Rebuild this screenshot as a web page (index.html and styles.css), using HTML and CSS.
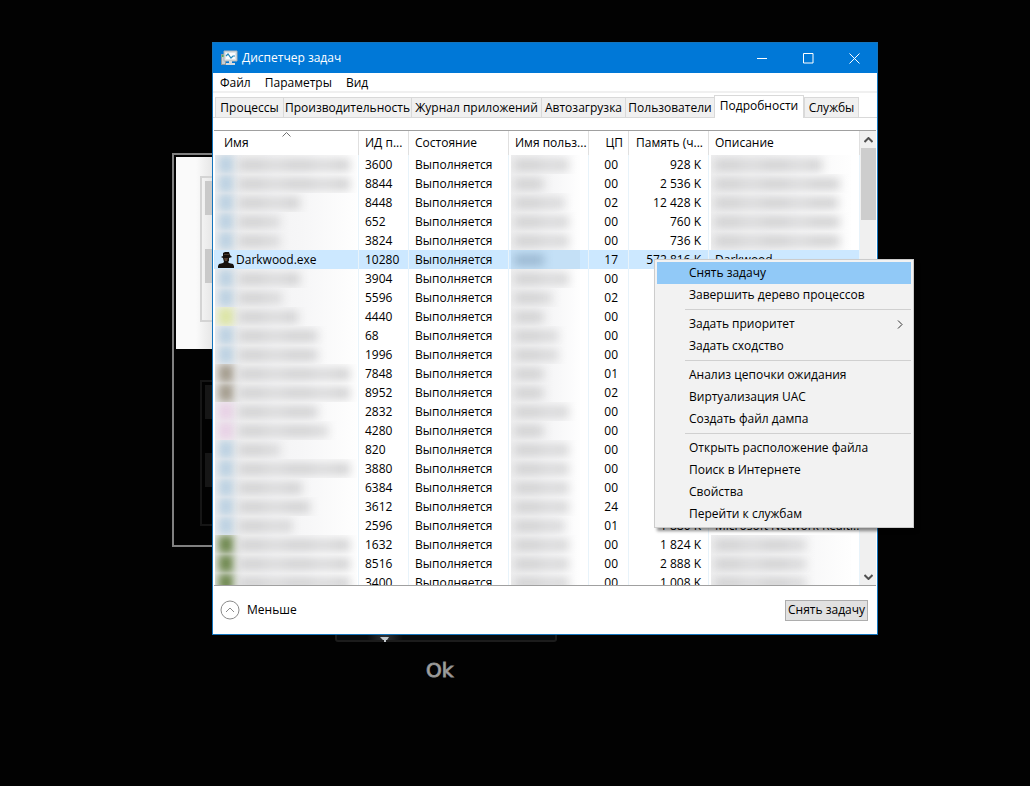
FILE: index.html
```
<!DOCTYPE html>
<html lang="ru">
<head>
<meta charset="utf-8">
<title>Диспетчер задач</title>
<link rel="stylesheet" href="styles.css">
</head>
<body>
<main class="desktop">
  <div class="game-panel" aria-hidden="true">
    <div class="save-slot save-slot-light"><div class="slot-frame"><i></i><i></i></div></div>
    <div class="save-slot save-slot-dark"><div class="slot-frame"><i></i><i></i></div></div>
  </div>
  <div class="game-slider" aria-hidden="true"><svg width="14" height="12" viewBox="0 0 14 12"><path d="M1 0h9L8 3H7v2H5V3H4z" fill="#c3c9cd"/></svg></div>
  <button class="game-ok" type="button">Ok</button>

  <section class="window" aria-label="Диспетчер задач">
    <header class="titlebar">
      <svg class="app-icon" width="17" height="16" viewBox="0 0 17 16">
        <path d="M0 4h5v11H0z" fill="#8f999f"/><path d="M1 5h3v9H1z" fill="#c9cfd2"/><path d="M1 5h2v2H1z" fill="#4fb35c"/>
        <path d="M3 1h13v10H3z" fill="#dfe5e8" stroke="#aab3b8"/><path d="M5 3h9v6H5z" fill="#fafdff"/>
        <path d="M5 6l2-2 3 4 2-2h2" fill="none" stroke="#2489bd" stroke-width="1.2"/>
        <path d="M8 11h3v2h3v2H5v-2h3z" fill="#d4dade"/>
      </svg>
      <h1>Диспетчер задач</h1>
      <div class="caption-buttons">
        <button type="button" aria-label="Свернуть"><svg width="11" height="11" viewBox="0 0 11 11"><path d="M0 5.5h10"/></svg></button>
        <button type="button" aria-label="Развернуть"><svg width="11" height="11" viewBox="0 0 11 11"><path d="M.5.5h9.500v9.500H.5z"/></svg></button>
        <button type="button" aria-label="Закрыть"><svg width="11" height="11" viewBox="0 0 11 11"><path d="M.5.5l10 10m0-10l-10 10"/></svg></button>
      </div>
    </header>
    <nav class="menubar">
      <button type="button">Файл</button><button type="button">Параметры</button><button type="button">Вид</button>
    </nav>
    <div class="tabs" role="tablist">
      <button type="button" role="tab">Процессы</button>
      <button type="button" role="tab">Производительность</button>
      <button type="button" role="tab">Журнал приложений</button>
      <button type="button" role="tab">Автозагрузка</button>
      <button type="button" role="tab">Пользователи</button>
      <button type="button" role="tab" aria-selected="true">Подробности</button>
      <button type="button" role="tab">Службы</button>
    </div>
    <div class="list">
      <div class="list-view">
        <table>
          <colgroup><col class="c-name"><col class="c-pid"><col class="c-state"><col class="c-user"><col class="c-cpu"><col class="c-mem"><col></colgroup>
          <thead><tr>
            <th>Имя<svg class="sort" width="9" height="5" viewBox="0 0 9 5"><path d="M.5 4.500l4-4 4 4"/></svg></th>
            <th>ИД п...</th><th>Состояние</th><th>Имя польз...</th><th class="num">ЦП</th><th class="num">Память (ч...</th><th>Описание</th>
          </tr></thead>
          <tbody id="rows"></tbody>
        </table>
      </div>
      <div class="scrollbar">
        <svg width="9" height="6" viewBox="0 0 9 6"><path d="M.5 5l4-4 4 4"/></svg>
        <div class="track"><div class="thumb"></div></div>
        <svg width="9" height="6" viewBox="0 0 9 6"><path d="M.5 1l4 4 4-4"/></svg>
      </div>
    </div>
    <footer class="footer">
      <button class="fewer" type="button"><svg width="20" height="20" viewBox="0 0 20 20"><circle cx="10" cy="10" r="9"/><path d="M6 12l4-4 4 4"/></svg>Меньше</button>
      <button class="end-task" type="button">Снять задачу</button>
    </footer>

    <div class="context-menu" role="menu">
      <button type="button" role="menuitem" class="active">Снять задачу</button>
      <button type="button" role="menuitem">Завершить дерево процессов</button>
      <hr>
      <button type="button" role="menuitem">Задать приоритет<svg width="6" height="9" viewBox="0 0 6 9"><path d="M1 .5l4 4-4 4"/></svg></button>
      <button type="button" role="menuitem">Задать сходство</button>
      <hr>
      <button type="button" role="menuitem">Анализ цепочки ожидания</button>
      <button type="button" role="menuitem">Виртуализация UAC</button>
      <button type="button" role="menuitem">Создать файл дампа</button>
      <hr>
      <button type="button" role="menuitem">Открыть расположение файла</button>
      <button type="button" role="menuitem">Поиск в Интернете</button>
      <button type="button" role="menuitem">Свойства</button>
      <button type="button" role="menuitem">Перейти к службам</button>
    </div>
  </section>
</main>
<script src="rows.js"></script>
</body>
</html>
```
FILE: styles.css
```
* { box-sizing: border-box; }
body { margin: 0; background: #020202; color: #000; font: 12px/16px "Open Sans", "Noto Sans", sans-serif; }
button { margin: 0; padding: 0; border: 0; background: none; color: inherit; font: inherit; white-space: nowrap; }
svg { display: block; fill: none; }
.desktop { position: relative; min-height: 100vh; overflow: hidden; }

/* game screen behind the window */
.game-panel { position: absolute; left: 172px; top: 153px; width: 300px; height: 394px; padding: 2px; border: 2px solid #808080; }
.save-slot { height: 192px; padding: 19px 24px; }
.save-slot-light { background: linear-gradient(90deg, #fafafa 20px, #e2e2e2 40px); }
.save-slot-dark { margin-top: 12px; }
.slot-frame { display: flex; flex-direction: column; gap: 34px; height: 146px; padding: 3px; border: 2px solid #d4d4d4; }
.slot-frame i { height: 34px; background: #c9c9c9; }
.save-slot-dark .slot-frame { border-color: #161616; }
.save-slot-dark i { background: #161616; }
.game-slider { position: absolute; left: 335px; top: 620px; width: 222px; height: 22px; padding: 15px 42px 0; border: 2px solid #1c1c1c; border-radius: 3px; background: radial-gradient(circle at 48px 16px, #303336, #080b0e 18px); }
.game-ok { position: absolute; left: 426px; top: 658px; color: #a8a8a8; font: 20px/24px "DejaVu Sans", sans-serif; -webkit-text-stroke: 1px #909090; }

.window { position: absolute; left: 212px; right: 152px; top: 42px; bottom: 151px; display: flex; flex-direction: column; border: 1px solid #1475bd; background: #fff; }
.titlebar { display: flex; flex: none; align-items: center; height: 30px; padding-left: 8px; background: #0078d7; color: #fff; }
.titlebar h1 { flex: 1; margin: 0 0 0 4px; font-size: 12px; font-weight: 400; }
.caption-buttons { display: flex; height: 30px; }
.caption-buttons button { display: grid; place-items: center; width: 46px; }
.caption-buttons path { stroke: #fff; }
.menubar { display: flex; flex: none; gap: 14px; height: 20px; padding: 2px 0 0 7px; border-bottom: 2px solid #f0f0f0; }

.tabs { display: grid; flex: none; grid-template-columns: 68px 128px 130px 84px 89px 90px 55px; align-items: end; height: 25px; padding-left: 2px; border-bottom: 1px solid #d9d9d9; }
.tabs button { height: 20px; border: 1px solid #d9d9d9; border-width: 1px 0 0 1px; background: #f0f0f0; }
.tabs button:last-child { border-right-width: 1px; }
.tabs [aria-selected] { height: 23px; margin-bottom: -1px; padding-bottom: 3px; border-width: 1px 1px 0; background: #fff; }

.list { display: flex; flex: 1; min-height: 0; margin: 12px 1px 0; border: 1px solid #a0a0a0; border-width: 1px 0; }
.list-view { flex: 1; overflow: hidden; }
table { width: 100%; table-layout: fixed; border-collapse: separate; border-spacing: 0; }
.c-name { width: 145px; }
.c-pid { width: 50px; }
.c-state { width: 100px; }
.c-user { width: 80px; }
.c-cpu { width: 40px; }
.c-mem { width: 80px; }
th, td { padding: 0 6px; border-right: 1px solid #e8f3fa; overflow: hidden; text-align: left; font-weight: 400; white-space: nowrap; }
th { position: relative; height: 24px; border-color: #e0e0e0; }
th:first-child { padding-left: 10px; }
td { height: 19px; line-height: 18px; }
td:first-child { padding: 0 1px; }
th.num { text-align: right; padding: 0 5px 0 0; }
td.num { text-align: right; padding: 0 7px 0 0; }
td.cpu { padding-right: 10px; }
.sort { position: absolute; left: 68px; top: 1px; }
.sort path { stroke: #707070; }
.selected td { background: #cce8ff; }
.process { display: flex; align-items: center; gap: 2px; padding-left: 3px; }

/* obscured values */
td.hidden { padding: 0 8px 0 2px; }
.blur { display: flex; align-items: center; gap: 4px; height: 19px; padding-left: 3px; overflow: hidden; background: linear-gradient(90deg, #efeff0, #f6f6f7 60%, #fefefe); }
.blur b { flex: none; width: 16px; height: 19px; filter: blur(4px); }
.blur span { height: 12px; background: repeating-linear-gradient(90deg, #d2d2d3 0 27px, #d9d9da 27px 48px); filter: blur(5px); }
.blur .blue { background: #bdd2e2; }
.blur .yellow { background: #dce5a5; }
.blur .brown { background: #a59e90; }
.blur .pink { background: #e8d2e6; }
.blur .green { background: #708950; }
.selected .blur { background: #c4e0f6; }
.selected .blur span { background: #9cb9d2; }

.scrollbar { display: flex; flex: none; flex-direction: column; align-items: center; justify-content: space-between; width: 16px; padding: 6px 0 5px; background: #f0f0f0; }
.scrollbar path { stroke: #505050; stroke-width: 2; }
.track { flex: 1; width: 15px; margin: 5px 0; }
.thumb { height: 17%; background: #cdcdcd; }

.footer { display: flex; flex: none; align-items: center; justify-content: space-between; height: 48px; padding: 0 9px 0 7px; }
.fewer { display: flex; align-items: center; gap: 7px; }
.fewer svg { stroke: #8a8a8a; }
.end-task { width: 83px; height: 21px; border: 1px solid #adadad; background: #e1e1e1; }

.context-menu { position: absolute; right: -37px; top: 216px; width: 260px; padding: 2px; border: 1px solid #ccc; background: #f2f2f2; box-shadow: 3px 3px 3px rgba(0, 0, 0, .45); }
.context-menu button { display: flex; align-items: center; justify-content: space-between; width: 100%; height: 22px; padding: 0 8px 0 32px; }
.context-menu path { stroke: #333; }
.context-menu .active { background: #91c9f7; }
.context-menu hr { height: 1px; margin: 3px 0 3px 28px; border: 0; background: #d0d0d0; }
```
FILE: rows.js
```
// [pid, cpu, memory, icon colour, name width, user width, description width]
const rows = [
  [3600, '00', '928 K', 'blue', 112, 54, 108],
  [8844, '00', '2 536 K', 'blue', 112, 30, 126],
  [8448, '02', '12 428 K', 'blue', 62, 50, 124],
  [652, '00', '760 K', 'blue', 42, 54, 126],
  [3824, '00', '736 K', 'blue', 42, 54, 126],
  [10280, '17', '572 816 K', null, 0, 30, 0],
  [3904, '00', '', 'blue', 62, 54, 0],
  [5596, '02', '', 'blue', 44, 38, 0],
  [4440, '00', '', 'yellow', 60, 30, 0],
  [68, '00', '', 'blue', 80, 44, 0],
  [1996, '00', '', 'blue', 80, 44, 0],
  [7848, '01', '', 'brown', 112, 30, 0],
  [8952, '02', '', 'brown', 112, 30, 0],
  [2832, '00', '', 'pink', 80, 54, 0],
  [4280, '00', '', 'pink', 90, 30, 0],
  [820, '00', '', 'blue', 42, 54, 0],
  [3880, '00', '', 'blue', 112, 54, 0],
  [6384, '00', '', 'blue', 64, 54, 0],
  [3612, '24', '', 'blue', 72, 54, 0],
  [2596, '01', '1 880 K', 'blue', 54, 50, 0],
  [1632, '00', '1 824 K', 'green', 112, 54, 92],
  [8516, '00', '2 888 K', 'green', 112, 54, 92],
  [3400, '00', '1 008 K', 'green', 112, 54, 92]
];
const descriptions = { 10280: 'Darkwood', 2596: 'Microsoft Network Realti...' };
const smudge = (width, icon) =>
  `<div class="blur">${icon ? `<b class="${icon}"></b>` : ''}<span style="width:${width}px"></span></div>`;
const hat = `<svg width="16" height="16" viewBox="0 0 16 16"><path d="M5 4V1l2-1h4l1 3 2 2-3 1v3l-1 1 1 1 4 1 1 2v2H0v-2l1-2 4-1 1-1-1-4-2-1z" fill="#17120f"/><path d="M6 6h4L9 9H7z" fill="#5b4334"/><path d="M6 2h5v1H6z" fill="#4a3a2e"/></svg>`;
document.getElementById('rows').innerHTML = rows.map(([pid, cpu, mem, icon, name, user, desc]) => `
  <tr${icon ? '' : ' class="selected"'}>
    <td>${icon ? smudge(name, icon) : `<div class="process">${hat}Darkwood.exe</div>`}</td>
    <td>${pid}</td><td>Выполняется</td>
    <td class="hidden">${smudge(user)}</td>
    <td class="num cpu">${cpu}</td><td class="num">${mem}</td>
    ${desc ? `<td class="hidden">${smudge(desc)}</td>` : `<td>${descriptions[pid] || ''}</td>`}
  </tr>`).join('');
```
